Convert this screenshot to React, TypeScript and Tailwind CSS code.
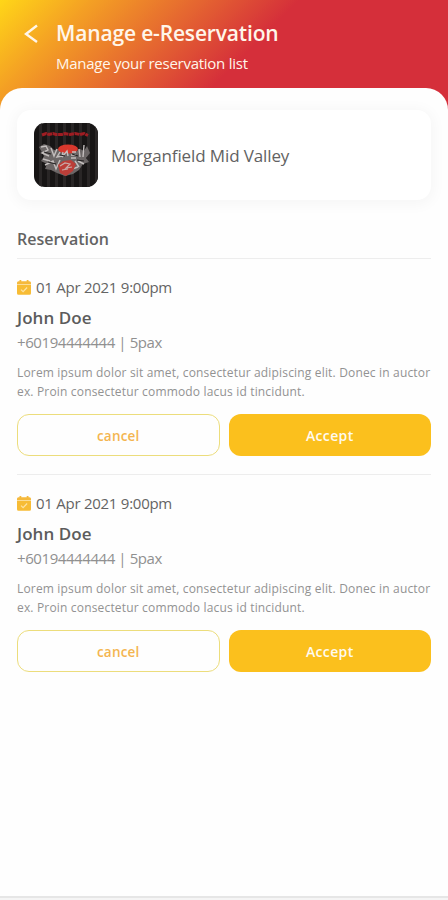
import React from "react";

const lorem = [
  "Lorem ipsum dolor sit amet, consectetur adipiscing elit. Donec in auctor",
  "ex. Proin consectetur commodo lacus id tincidunt.",
];

function CalendarCheck() {
  return (
    <svg viewBox="0 0 14 15" className="h-[15px] w-[14px] shrink-0">
      <path d="M2.5 0h1.8v1.2h5.4V0h1.8v1.2H12.5A1.5 1.5 0 0 1 14 2.7V4H0V2.7A1.5 1.5 0 0 1 1.5 1.2h1z" fill="#f5b93c" />
      <path d="M0 4.4h14v8.9a1.5 1.5 0 0 1-1.5 1.5h-11A1.5 1.5 0 0 1 0 13.3z" fill="#f7bc35" />
      <path d="M4 9.6l2.1 2.1 4-4.2" fill="none" stroke="#fde3a5" strokeWidth="1.2" />
    </svg>
  );
}

function Logo() {
  return (
    <svg viewBox="0 0 64 64" className="size-16 shrink-0 rounded-[11px] bg-[#171515]">
      {[5, 13, 21, 29, 37, 45, 53, 61].map((x) => (
        <rect key={x} x={x} width="3" height="64" fill="#292626" />
      ))}
      <path d="M8 12l4-1.5 3 1 4-1 3 1h6l3-1 5 1 5-1 5 1 4-1 4 2" fill="none" stroke="#9f1d23" strokeWidth="3" strokeDasharray="5 .6" />
      <path d="M5 24l5-3 6 2 4 4 5-1 5 3 6-2 5 2 5-3 4 2 3-5 3 7-4 5 3 4-6 2-4 6-6 4-8 2-8-3-6-3-6-1 2-5-6-3 3-5z" fill="#6b6666" />
      <ellipse cx="34" cy="26" rx="10" ry="4.5" fill="#d8382d" />
      <path d="M7 24l5-1 2 4-6 3 7 3m2-8l3 8 3-7m3 3l-3 5 5-1m1-4l-1 5 5-6 1 5m4-4h4m-5 3h5m-5 3h5m3-9l1 8m4-12l-1 12M9 36l7 2m-5 4l8-4 3 8 4-9m18 1l6 3m-9-3l4 6m-7 2l6-2" fill="none" stroke="#c3bebd" strokeWidth="1.4" />
      <path d="M10 29l7 2m9 1l5 1m7-2l6 2M14 39l8 2m21-4l7 1" stroke="#262323" strokeWidth="1.2" />
      <path d="M24 42l5-4 8-1 5 4-3 7-7 5-6-3z" fill="#bb3e38" />
      <path d="M26 43l5-3 5 1-4 4 6-1m-10 3l6-1" fill="none" stroke="#c9aaa6" strokeWidth="1.2" />
    </svg>
  );
}

function Reservation() {
  return (
    <article className="h-[216px] pt-[17px]">
      <div className="flex h-[22px] items-center gap-[5px]">
        <CalendarCheck />
        <span className="text-[15px] leading-[22px] tracking-[-0.26px] text-[#646464]">01 Apr 2021 9:00pm</span>
      </div>
      <h3 className="mt-[9px] h-[22px] text-[17px] font-semibold leading-[22px] tracking-[0.05px] text-[#5c5c5c]">John Doe</h3>
      <p className="mt-[3px] h-[20px] text-[15px] leading-[20px] tracking-[-0.42px] text-[#909090]">+60194444444 | 5pax</p>
      <div className="mt-[11px] text-[12px] leading-[19px] text-[#929292]">
        <p className="whitespace-nowrap tracking-[0.17px]">{lorem[0]}</p>
        <p className="whitespace-nowrap tracking-[0.17px]">{lorem[1]}</p>
      </div>
      <div className="mt-[13px] grid grid-cols-2 gap-[9px]">
        <button className="h-[42px] rounded-[12px] border border-[#ecdd7c] pt-[2px] text-[13.5px] font-semibold tracking-[0.2px] text-[#f4b550]">cancel</button>
        <button className="h-[42px] rounded-[12px] bg-[#fbc01d] pt-px text-[14px] font-semibold tracking-[0.35px] text-[#fffaf0]">Accept</button>
      </div>
    </article>
  );
}

export default function App() {
  return (
    <div className="flex h-[900px] w-[448px] flex-col overflow-hidden bg-[linear-gradient(135deg,#ffd618_0px,#f4a024_65px,#e46331_145px,#d52f3a_212px)] font-['Open_Sans','Noto_Sans',sans-serif]">
      <header className="flex h-[88px] shrink-0 text-[#fff6ea]">
        <svg viewBox="0 0 14 20" className="ml-[24px] mt-[24px] h-5 w-[14px]" fill="none" stroke="currentColor" strokeWidth="2.4">
          <path d="M13 1.5L2 10l11 8" />
        </svg>
        <div className="ml-[18px] pt-[19px]">
          <h1 className="whitespace-nowrap text-[21px] font-semibold leading-[28px] tracking-[-0.16px]">Manage e-Reservation</h1>
          <p className="mt-[5px] whitespace-nowrap text-[15px] leading-[22px] tracking-[-0.26px]">Manage your reservation list</p>
        </div>
      </header>
      <main className="flex flex-1 flex-col rounded-t-[22px] bg-[#fefefe] px-[17px] pt-[22px]">
        <section className="flex h-[90px] shrink-0 items-center gap-[13px] rounded-[14px] bg-white pl-[17px] shadow-[0_2px_14px_3px_rgba(0,0,0,0.035)]">
          <Logo />
          <span className="pt-[2px] text-[17px] leading-6 tracking-[-0.12px] text-[#626262]">Morganfield Mid Valley</span>
        </section>
        <h2 className="mt-[27px] h-6 shrink-0 text-[16px] font-semibold leading-6 text-[#636363]">Reservation</h2>
        <div className="mt-[7px] divide-y divide-[#ededed] border-t border-[#ededed]">
          <Reservation />
          <Reservation />
        </div>
      </main>
      <div className="h-[4px] shrink-0 border-t-2 border-[#e6e6e6] bg-[#f5f5f5]" />
    </div>
  );
}
